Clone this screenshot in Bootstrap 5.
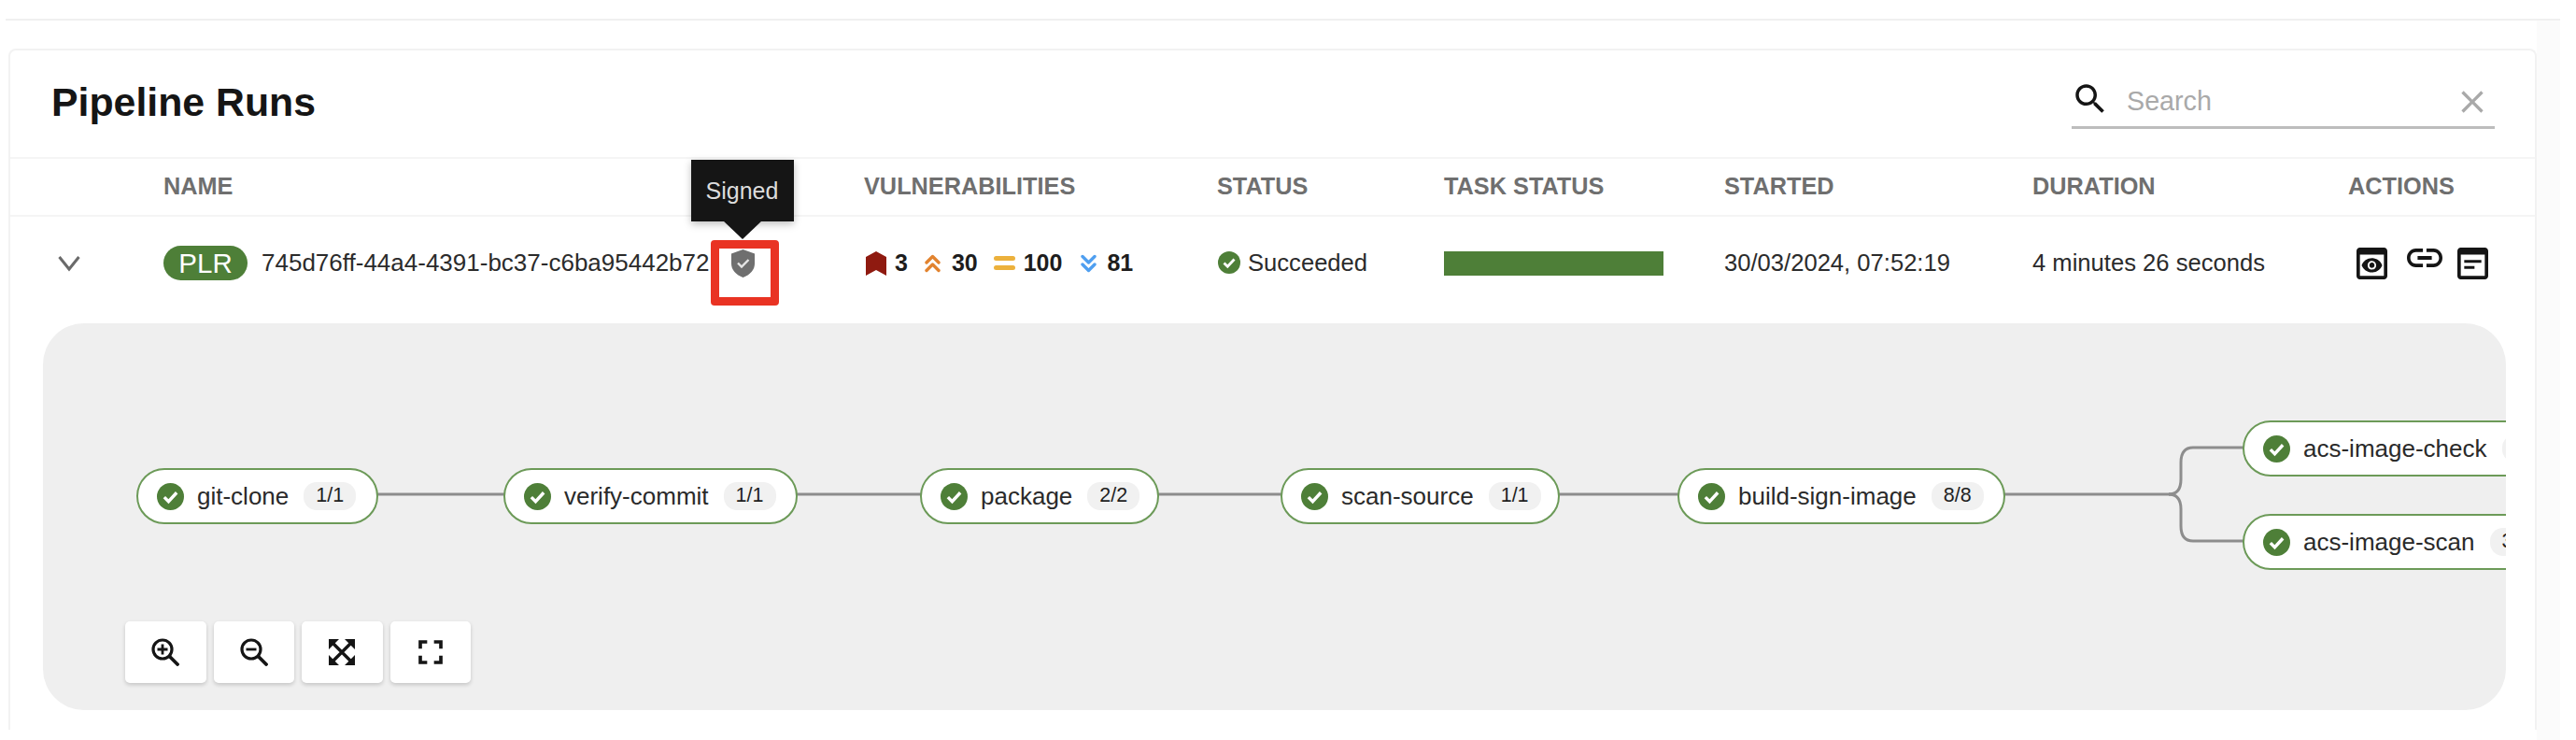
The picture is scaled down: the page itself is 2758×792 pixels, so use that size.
<!DOCTYPE html>
<html lang="en">
<head>
<meta charset="utf-8">
<title>Pipeline Runs</title>
<link rel="stylesheet" href="https://cdn.jsdelivr.net/npm/bootstrap@5.3.0/dist/css/bootstrap.min.css">
<style>
html,body{height:792px;overflow:hidden}
body{background:#fff;font-family:"Liberation Sans",Arial,sans-serif;color:#151515;font-size:25.6px}
.page-top{height:22px;margin:0 17px 0 6px;border-bottom:2px solid #f0f0f0}
.page-body{background:linear-gradient(to right,#fff 2716px,#fbfbfb 2716px,#fbfbfb 2741px,#fff 2741px);height:770px;padding-top:30px}
.runs-card{margin-left:9px;width:2707px;height:729px;border:2px solid #f2f2f2;border-bottom:0;border-radius:8px 8px 0 0;background:#fff;overflow:hidden}
.runs-head{height:114px;padding:0 43px 0 44px}
.runs-title{font-size:42.8px;font-weight:700;margin:30px 0 0;line-height:1.2;color:#151515}
.search-box{width:453px;height:56px;margin-top:28px;margin-bottom:-2px;border-bottom:3px solid #bdbdbd;padding:0 9px 0 5px}
.search-box input{border:0;padding:0;background:transparent;font-size:28.7px;height:48px;margin-left:22px;box-shadow:none;color:#151515}
.search-box input::placeholder{color:#a9a9a9}
.search-ico{width:42px;height:42px;margin:-6px -4px 0 -6px;flex:none}
.clear-ico{width:40px;height:40px;margin-right:-5px;flex:none}
.runs-table{table-layout:fixed;width:100%;margin:0;--bs-table-bg:transparent}
.runs-table th,.runs-table td{padding:0;vertical-align:middle}
.runs-table thead th{height:62px;font-size:25.3px;font-weight:700;color:#6f6f6f;border-top:2px solid #f5f5f5;border-bottom:2px solid #f5f5f5}
.c1{width:164px}.c2{width:750px}.c3{width:378px}.c4{width:243px}.c5{width:300px}.c6{width:330px}.c7{width:338px}
.row-main td{height:115px;padding-bottom:15px;font-size:25.6px;color:#2b2b2b}
.chev{width:24px;height:20px;margin-left:51px;display:block}
.plr-pill{width:90px;height:37px;border-radius:19px;background:#4e7f38;color:#fff;font-size:29.5px;line-height:37px;text-align:center;margin-right:15px;flex:none}
.name-wrap{position:relative;white-space:nowrap}
.shield-slot{width:25px;height:30px;margin-left:23px;flex:none;position:relative}
.id-text{font-size:26px}
.shield-slot svg{display:block;width:25px;height:30px}
.red-box{position:absolute;left:-22px;top:-10px;width:73px;height:70px;border:9px solid #e93323;border-radius:4px}
.sign-tip{position:absolute;left:-43px;top:-96px;width:110px;height:66px;background:#151515;color:#dcdcdc;font-size:25px;line-height:66px;text-align:center;box-shadow:0 3px 8px rgba(0,0,0,.25)}
.sign-tip::after{content:"";position:absolute;left:34px;bottom:-19px;border-left:21px solid transparent;border-right:21px solid transparent;border-top:20px solid #151515}
.vul-wrap{padding-left:2px;font-size:25px;font-weight:700;color:#1d1d1d}
.sev{display:block;flex:none}
.sev-critical{width:22px;height:26px;margin-right:9px}
.sev-high{width:17px;height:20px;margin:0 12px 0 18px}
.sev-mid{width:23px;height:15px;margin:0 9px 0 17px}
.sev-low{width:17px;height:20px;margin:0 11px 0 20px}
.ok-ico{width:24px;height:24px;display:block;flex:none}
.status-wrap{gap:8px;padding-left:1px}
.task-bar{width:235px;height:26px;background:#4e7f38}
.act-wrap{padding-left:9px;height:34px}
.act-ico{display:block;flex:none;width:33px;height:34px}
.act-link{width:38px;height:20px;margin:1px 16px 0 21px}
.graph-cell{padding:0 31px 14px 35px!important;border-bottom:2px solid #f5f5f5}
.graph-panel{position:relative;height:414px;border-radius:44px;background:#efefef;overflow:hidden}
.graph-lines{position:absolute;left:0;top:0;width:2640px;height:414px}
.task-node{position:absolute;height:60px;background:#fff;border:2px solid #6c9a58;border-radius:30px;padding-left:20px;font-size:26px;color:#2a2a2a;white-space:nowrap}
.task-node .ok-ico{width:29px;height:29px;margin-right:14px}
.step-count{font-size:21.5px;line-height:29px;width:56px;height:30px;border-radius:14px;background:#f1f1f1;text-align:center;margin-left:16px;flex:none;color:#1f1f1f}
.n1{left:100px;top:155px;width:259px}
.n2{left:493px;top:155px;width:315px}
.n3{left:939px;top:155px;width:256px}
.n4{left:1325px;top:155px;width:299px}
.n5{left:1750px;top:155px;width:351px}
.n6{left:2355px;top:104px;width:340px}
.n7{left:2355px;top:204px;width:340px}
.zoom-tools{position:absolute;left:88px;top:319px;gap:8px}
.zoom-btn{width:86.500px;height:66px;padding:0;background:#fff;border:0;border-radius:5px;box-shadow:0 2px 4px rgba(0,0,0,.18)}
.zoom-btn svg{display:block;margin:0 auto}
.zb-mag{width:30px;height:30px}
.zb-fit{width:28px;height:28px}
.zb-full{width:44px;height:44px}
</style>
</head>
<body>
<div class="page-top"></div>
<div class="page-body">
<div class="runs-card">
  <div class="runs-head d-flex justify-content-between align-items-start">
    <h1 class="runs-title">Pipeline Runs</h1>
    <div class="search-box d-flex align-items-center">
      <svg class="search-ico" viewBox="0 0 24 24" fill="#151515"><path d="M15.5 14h-.79l-.28-.27C15.41 12.59 16 11.11 16 9.5 16 5.91 13.09 3 9.5 3S3 5.91 3 9.5 5.91 16 9.5 16c1.61 0 3.09-.59 4.23-1.57l.27.28v.79l5 4.99L20.49 19l-4.99-5zm-6 0C7.01 14 5 11.99 5 9.5S7.01 5 9.5 5 14 7.01 14 9.5 11.99 14 9.5 14z"/></svg>
      <input class="form-control" type="text" placeholder="Search">
      <svg class="clear-ico" viewBox="0 0 24 24" fill="#a9a9a9"><path d="M19 6.41L17.59 5 12 10.59 6.41 5 5 6.41 10.59 12 5 17.59 6.41 19 12 13.41 17.59 19 19 17.59 13.41 12z"/></svg>
    </div>
  </div>
  <table class="table table-borderless runs-table">
    <thead>
      <tr>
        <th class="c1"></th><th class="c2">NAME</th><th class="c3">VULNERABILITIES</th><th class="c4">STATUS</th><th class="c5">TASK STATUS</th><th class="c6">STARTED</th><th class="c7">DURATION</th><th>ACTIONS</th>
      </tr>
    </thead>
    <tbody>
      <tr class="row-main">
        <td><svg class="chev" viewBox="0 0 24 20" fill="none" stroke="#6a6a6a" stroke-width="3"><path d="M1.5 3 12 16 22.5 3"/></svg></td>
        <td>
          <div class="name-wrap d-flex align-items-center">
            <span class="plr-pill">PLR</span>
            <span class="id-text">745d76ff-44a4-4391-bc37-c6ba95442b72</span>
            <span class="shield-slot">
              <span class="sign-tip">Signed</span>
              <span class="red-box"></span>
              <svg viewBox="0 0 25 30"><path d="M12.5 0 25 4.5v10.5c0 7-5 12-12.500 15C5 27 0 22 0 15V4.500z" fill="#6f6f6f"/><path d="M7 14.500l4 4 7.500-7.500" fill="none" stroke="#e6e6e6" stroke-width="2.400"/></svg>
            </span>
          </div>
        </td>
        <td>
          <div class="vul-wrap d-flex align-items-center">
            <svg class="sev sev-critical" viewBox="0 0 22 26"><path d="M11 0 22 6v20l-11-6-11 6V6z" fill="#8f1a10"/></svg><span>3</span>
            <svg class="sev sev-high" viewBox="0 0 17 20" fill="none" stroke="#e2832f" stroke-width="3.400" stroke-linecap="round" stroke-linejoin="round"><path d="M2 9l6.500-6.500L15 9M2 17.500 8.500 11l6.500 6.500"/></svg><span>30</span>
            <svg class="sev sev-mid" viewBox="0 0 23 15" fill="#ecb13c"><rect width="23" height="5" rx="2.500"/><rect y="10" width="23" height="5" rx="2.500"/></svg><span>100</span>
            <svg class="sev sev-low" viewBox="0 0 17 20" fill="none" stroke="#4f9ff0" stroke-width="3.400" stroke-linecap="round" stroke-linejoin="round"><path d="M2 2.500 8.500 9 15 2.500M2 11l6.500 6.500L15 11"/></svg><span>81</span>
          </div>
        </td>
        <td>
          <div class="status-wrap d-flex align-items-center">
            <svg class="ok-ico" viewBox="0 0 24 24"><circle cx="12" cy="12" r="12" fill="#4e7f38"/><path d="M6.500 12.500l3.800 3.800 7.200-7.800" fill="none" stroke="#fff" stroke-width="2.800"/></svg>
            <span>Succeeded</span>
          </div>
        </td>
        <td><div class="task-bar"></div></td>
        <td>30/03/2024, 07:52:19</td>
        <td>4 minutes 26 seconds</td>
        <td>
          <div class="act-wrap d-flex align-items-start">
            <svg class="act-ico" viewBox="3 3 18 18" preserveAspectRatio="none" fill="#151515"><path d="M19 3H5c-1.110 0-2 .9-2 2v14c0 1.100.89 2 2 2h14c1.100 0 2-.9 2-2V5c0-1.100-.89-2-2-2zm0 16H5V7h14v12zm-5.500-6c0 .83-.67 1.500-1.500 1.500s-1.500-.67-1.500-1.500.67-1.500 1.500-1.500 1.500.67 1.500 1.500zM12 9c-2.730 0-5.060 1.660-6 4 .94 2.340 3.270 4 6 4s5.060-1.660 6-4c-.94-2.340-3.270-4-6-4zm0 6.500c-1.380 0-2.500-1.120-2.500-2.500s1.120-2.500 2.500-2.500 2.500 1.120 2.500 2.500-1.120 2.500-2.500 2.500z"/></svg>
            <svg class="act-link" viewBox="2 7 20 10" preserveAspectRatio="none" fill="#151515"><path d="M3.900 12c0-1.710 1.390-3.100 3.100-3.100h4V7H7c-2.760 0-5 2.240-5 5s2.240 5 5 5h4v-1.900H7c-1.710 0-3.100-1.390-3.100-3.100zM8 13h8v-2H8v2zm9-6h-4v1.900h4c1.710 0 3.100 1.390 3.100 3.100s-1.390 3.100-3.100 3.100h-4V17h4c2.760 0 5-2.240 5-5s-2.240-5-5-5z"/></svg>
            <svg class="act-ico" viewBox="3 3 18 18" preserveAspectRatio="none" fill="#151515"><path d="M19 3H5c-1.110 0-2 .9-2 2v14c0 1.100.89 2 2 2h14c1.100 0 2-.9 2-2V5c0-1.100-.89-2-2-2zm0 16H5V7h14v12z"/><path d="M7 10h10v1.600H7zM7 13.400h6V15H7z"/></svg>
          </div>
        </td>
      </tr>
      <tr>
        <td colspan="8" class="graph-cell">
          <div class="graph-panel">
            <svg class="graph-lines" viewBox="0 0 2640 414" fill="none" stroke="#8d8d8d" stroke-width="3">
              <path d="M101 183H2282"/>
              <path d="M2276 183c9 0 13-6 13-16v-18c0-10 4-16 13-16h60"/>
              <path d="M2276 183c9 0 13 6 13 16v18c0 10 4 16 13 16h60"/>
            </svg>
            <div class="task-node n1 d-flex align-items-center"><svg class="ok-ico" viewBox="0 0 24 24"><circle cx="12" cy="12" r="12" fill="#4e7f38"/><path d="M6.500 12.500l3.800 3.800 7.200-7.800" fill="none" stroke="#fff" stroke-width="2.800"/></svg><span>git-clone</span><span class="step-count">1/1</span></div>
            <div class="task-node n2 d-flex align-items-center"><svg class="ok-ico" viewBox="0 0 24 24"><circle cx="12" cy="12" r="12" fill="#4e7f38"/><path d="M6.500 12.500l3.800 3.800 7.200-7.800" fill="none" stroke="#fff" stroke-width="2.800"/></svg><span>verify-commit</span><span class="step-count">1/1</span></div>
            <div class="task-node n3 d-flex align-items-center"><svg class="ok-ico" viewBox="0 0 24 24"><circle cx="12" cy="12" r="12" fill="#4e7f38"/><path d="M6.500 12.500l3.800 3.800 7.200-7.800" fill="none" stroke="#fff" stroke-width="2.800"/></svg><span>package</span><span class="step-count">2/2</span></div>
            <div class="task-node n4 d-flex align-items-center"><svg class="ok-ico" viewBox="0 0 24 24"><circle cx="12" cy="12" r="12" fill="#4e7f38"/><path d="M6.500 12.500l3.800 3.800 7.200-7.800" fill="none" stroke="#fff" stroke-width="2.800"/></svg><span>scan-source</span><span class="step-count">1/1</span></div>
            <div class="task-node n5 d-flex align-items-center"><svg class="ok-ico" viewBox="0 0 24 24"><circle cx="12" cy="12" r="12" fill="#4e7f38"/><path d="M6.500 12.500l3.800 3.800 7.200-7.800" fill="none" stroke="#fff" stroke-width="2.800"/></svg><span>build-sign-image</span><span class="step-count">8/8</span></div>
            <div class="task-node n6 d-flex align-items-center"><svg class="ok-ico" viewBox="0 0 24 24"><circle cx="12" cy="12" r="12" fill="#4e7f38"/><path d="M6.500 12.500l3.800 3.800 7.200-7.800" fill="none" stroke="#fff" stroke-width="2.800"/></svg><span>acs-image-check</span><span class="step-count">1/1</span></div>
            <div class="task-node n7 d-flex align-items-center"><svg class="ok-ico" viewBox="0 0 24 24"><circle cx="12" cy="12" r="12" fill="#4e7f38"/><path d="M6.500 12.500l3.800 3.800 7.200-7.800" fill="none" stroke="#fff" stroke-width="2.800"/></svg><span>acs-image-scan</span><span class="step-count">3/3</span></div>
            <div class="zoom-tools d-flex">
              <button type="button" class="btn zoom-btn" aria-label="Zoom in"><svg class="zb-mag" viewBox="0 0 30 30" fill="none" stroke="#151515"><circle cx="12" cy="12" r="10" stroke-width="3.200"/><path d="M20 20l8 8" stroke-width="3.800" stroke-linecap="round"/><path d="M12 6.500v11M6.500 12h11" stroke-width="2.800"/></svg></button>
              <button type="button" class="btn zoom-btn" aria-label="Zoom out"><svg class="zb-mag" viewBox="0 0 30 30" fill="none" stroke="#151515"><circle cx="12" cy="12" r="10" stroke-width="3.200"/><path d="M20 20l8 8" stroke-width="3.800" stroke-linecap="round"/><path d="M6.500 12h11" stroke-width="2.800"/></svg></button>
              <button type="button" class="btn zoom-btn" aria-label="Fit"><svg class="zb-fit" viewBox="0 0 28 28" fill="#151515"><path d="M0 0h11L0 11zM28 0v11L17 0zM0 28V17l11 11zM28 28H17l11-11z"/><path d="M4 4l20 20M24 4 4 24" stroke="#151515" stroke-width="3.400"/></svg></button>
              <button type="button" class="btn zoom-btn" aria-label="Fullscreen"><svg class="zb-full" viewBox="0 0 24 24" fill="#151515"><path d="M7 14H5v5h5v-2H7v-3zm-2-4h2V7h3V5H5v5zm12 7h-3v2h5v-5h-2v3zM14 5v2h3v3h2V5h-5z"/></svg></button>
            </div>
          </div>
        </td>
      </tr>
    </tbody>
  </table>
</div>
</div>
<script src="https://cdn.jsdelivr.net/npm/bootstrap@5.3.0/dist/js/bootstrap.bundle.min.js"></script>
</body>
</html>
